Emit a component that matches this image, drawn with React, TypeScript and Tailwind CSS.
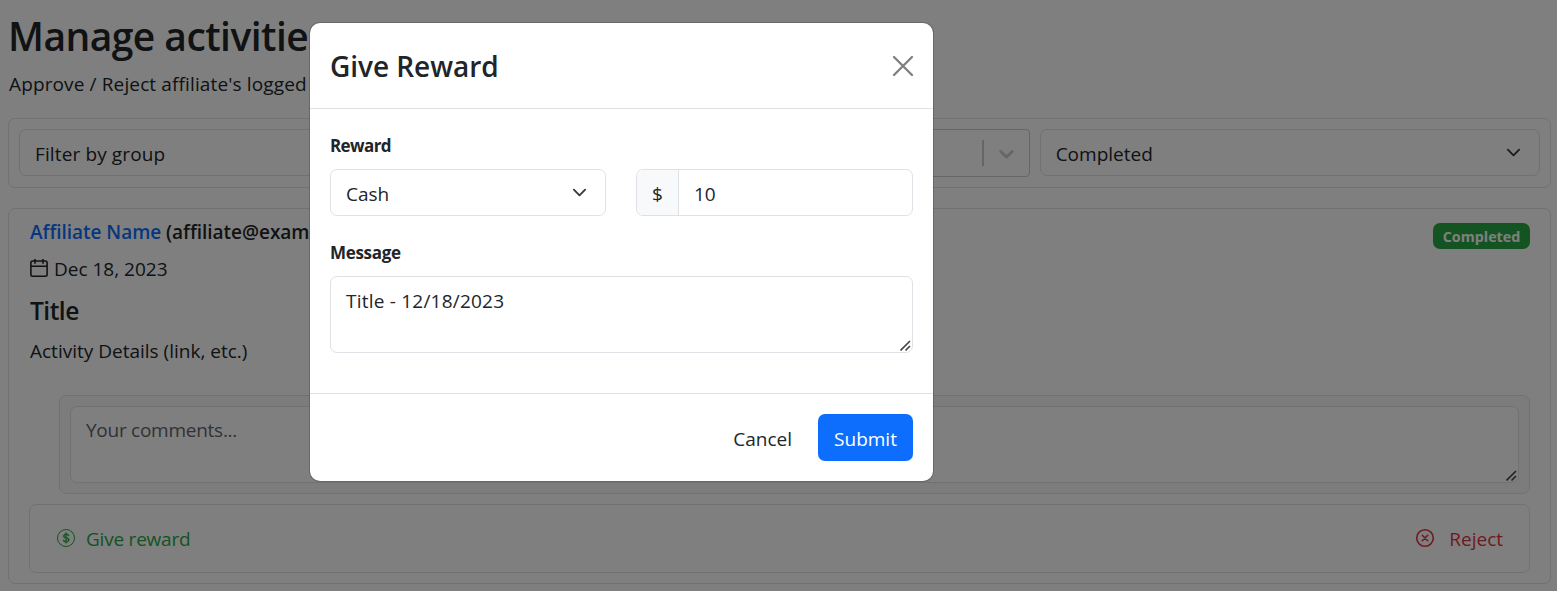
import type { ReactNode } from "react";
import { BsCurrencyDollar } from "react-icons/bs";

function Chevron() {
  return (
    <svg viewBox="0 0 16 16" className="h-[15px] w-[15px] shrink-0" fill="none" stroke="#343a40" strokeWidth="2" strokeLinecap="round" strokeLinejoin="round">
      <path d="m2 5 6 6 6-6" />
    </svg>
  );
}

function ResizeGrip() {
  return (
    <svg viewBox="0 0 12 12" className="absolute right-0 bottom-0 h-3 w-3" fill="none" stroke="#444" strokeWidth="1.6">
      <path d="M0.5 10.5 10 1M5.5 10.5 10 6" />
    </svg>
  );
}

function Select({ children }: { children: ReactNode }) {
  return (
    <div className="flex h-[47px] items-center justify-between rounded-[7px] border border-[#dee2e6] bg-white pr-[18px] pl-[15px]">
      <span className="pt-[3px]">{children}</span>
      <Chevron />
    </div>
  );
}

function Page() {
  return (
    <main className="flex h-[591px] flex-col pt-[13px] pr-1.5 pl-2">
      <h1 className="h-12 text-[39px] leading-[46px] font-semibold tracking-[-0.55px] whitespace-nowrap">Manage activities</h1>
      <p className="mt-2 h-[30px] pl-px tracking-[0.13px]">Approve / Reject affiliate's logged</p>

      <div className="mt-[19px] grid h-[70px] shrink-0 grid-cols-3 gap-[10px] rounded-[7px] border border-[#dee2e6] p-[10px]">
        <Select><span className="tracking-[0.12px]">Filter by group</span></Select>
        <div className="flex h-12 items-center justify-end rounded-[4px] border border-[#ccc] bg-white">
          <span className="h-[26px] w-0.5 bg-[#ccc]" />
          <svg viewBox="0 0 20 20" className="mr-[10px] ml-[10px] h-[25px] w-[25px]" fill="#ccc">
            <path d="M4.516 7.548c0.436-0.446 1.043-0.481 1.576 0l3.908 3.747 3.908-3.747c0.533-0.481 1.141-0.446 1.574 0 0.436 0.445 0.408 1.197 0 1.615-0.406 0.418-4.695 4.502-4.695 4.502-0.217 0.223-0.502 0.335-0.787 0.335s-0.57-0.112-0.789-0.335c0 0-4.287-4.084-4.695-4.502s-0.436-1.17 0-1.615z" />
          </svg>
        </div>
        <Select>Completed</Select>
      </div>

      <section className="mt-5 h-[376px] shrink-0 rounded-[7px] border border-[#dee2e6] px-5">
        <div className="flex h-[38px] justify-between pt-2">
          <div className="pl-px font-semibold tracking-[-0.03px] whitespace-nowrap">
            <span className="text-[#0d6efd]">Affiliate Name</span> (affiliate@examp
          </div>
          <span className="mt-1.5 h-[26px] w-[97px] rounded-[7px] bg-[#28a745] text-center text-[14.3px] leading-[28px] font-bold text-white">
            Completed
          </span>
        </div>
        <div className="mt-[7px] flex h-[30px] items-center pl-px">
          <svg viewBox="0 0 18 18" className="mr-[6px] mb-[3px] h-[18px] w-[18px]" fill="none" stroke="#212529" strokeWidth="1.6">
            <rect x="0.9" y="2" width="16.2" height="15.2" rx="1.7" />
            <path d="M1 7.2h16M5 0v4.8M13 0v4.8" />
          </svg>
          <span>Dec 18, 2023</span>
        </div>
        <h2 className="mt-[11px] h-[32px] pl-px text-[24.5px] leading-[32px] font-semibold tracking-[-0.5px]">Title</h2>
        <p className="mt-[9px] h-[30px] pl-px">Activity Details (link, etc.)</p>

        <div className="mt-[29px] ml-[30px] h-[99px] rounded-[7px] border border-[#dee2e6] bg-[#f8f9fa] p-[10px]">
          <div className="relative h-[77px] rounded-[7px] border border-[#dee2e6] bg-white px-[15px] pt-2 tracking-[-0.26px] text-[#5f666d]">
            Your comments...
            <ResizeGrip />
          </div>
        </div>

        <div className="mt-[10px] flex h-[69px] items-center justify-between rounded-[7px] border border-[#dee2e6] pr-[26px] pl-[27px]">
          <span className="flex items-center tracking-[-0.22px] text-[#28a745]">
            <span className="mr-[11px] mb-px flex h-[18px] w-[18px] items-center justify-center rounded-full border-[1.8px] border-[#28a745]">
              <BsCurrencyDollar size={12} strokeWidth={0.7} stroke="currentColor" />
            </span>
            Give reward
          </span>
          <span className="flex items-center text-[#dc3545]">
            <svg viewBox="0 0 18 18" className="mr-[15px] mb-px h-[18px] w-[18px] overflow-visible" fill="none" stroke="currentColor" strokeWidth="1.6" strokeLinecap="round">
              <circle cx="9" cy="9" r="8.3" />
              <path d="m6.3 6.3 5.4 5.4M11.7 6.3l-5.4 5.4" />
            </svg>
            Reject
          </span>
        </div>
      </section>
    </main>
  );
}

function RewardDialog() {
  return (
    <div role="dialog" className="h-[458px] w-[623px] rounded-[10px] bg-white shadow-[0_0_0_1px_rgba(0,0,0,0.18)]">
      <header className="flex h-[86px] items-center justify-between border-b border-[#dee2e6] px-5">
        <h2 className="text-[28px] leading-[44px] font-semibold tracking-[-0.05px]">Give Reward</h2>
        <svg viewBox="0 0 20 20" className="h-5 w-5 overflow-visible" fill="none" stroke="#7f7f7f" strokeWidth="2.3" strokeLinecap="round">
          <path d="m1 1 18 18M19 1 1 19" />
        </svg>
      </header>
      <div className="h-[285px] border-b border-[#dee2e6] px-5 pt-[22px]">
        <div className="h-[30px] text-[17px] leading-[30px] font-bold tracking-[-0.6px]">Reward</div>
        <div className="mt-2 flex gap-[30px]">
          <div className="w-[276px]">
            <Select>Cash</Select>
          </div>
          <div className="flex h-[47px] w-[277px] overflow-hidden rounded-[7px] border border-[#dee2e6]">
            <span className="flex w-[42px] items-center justify-center border-r border-[#dee2e6] bg-[#f8f9fa] pt-[3px]">$</span>
            <span className="flex items-center pt-[3px] pl-[15px]">10</span>
          </div>
        </div>
        <div className="mt-[22px] h-[30px] text-[17px] leading-[30px] font-bold tracking-[-0.3px]">Message</div>
        <div className="relative mt-2 h-[77px] rounded-[7px] border border-[#dee2e6] px-[15px] pt-[9px] tracking-[0.22px]">
          Title - 12/18/2023
          <ResizeGrip />
        </div>
      </div>
      <footer className="flex items-center justify-end px-5 pt-5">
        <span className="mr-[26px] pt-[3px]">Cancel</span>
        <span className="flex h-[47px] w-[95px] items-center justify-center rounded-[7px] bg-[#0d6efd] pt-[3px] text-white">Submit</span>
      </footer>
    </div>
  );
}

export default function App() {
  return (
    <div className="relative h-[591px] overflow-hidden bg-white font-['Open_Sans','Noto_Sans',sans-serif] text-[19px] leading-[30px] text-[#212529]">
      <Page />
      <div className="absolute inset-0 flex items-start bg-black/50 pt-[23px] pl-[310px]">
        <RewardDialog />
      </div>
    </div>
  );
}
